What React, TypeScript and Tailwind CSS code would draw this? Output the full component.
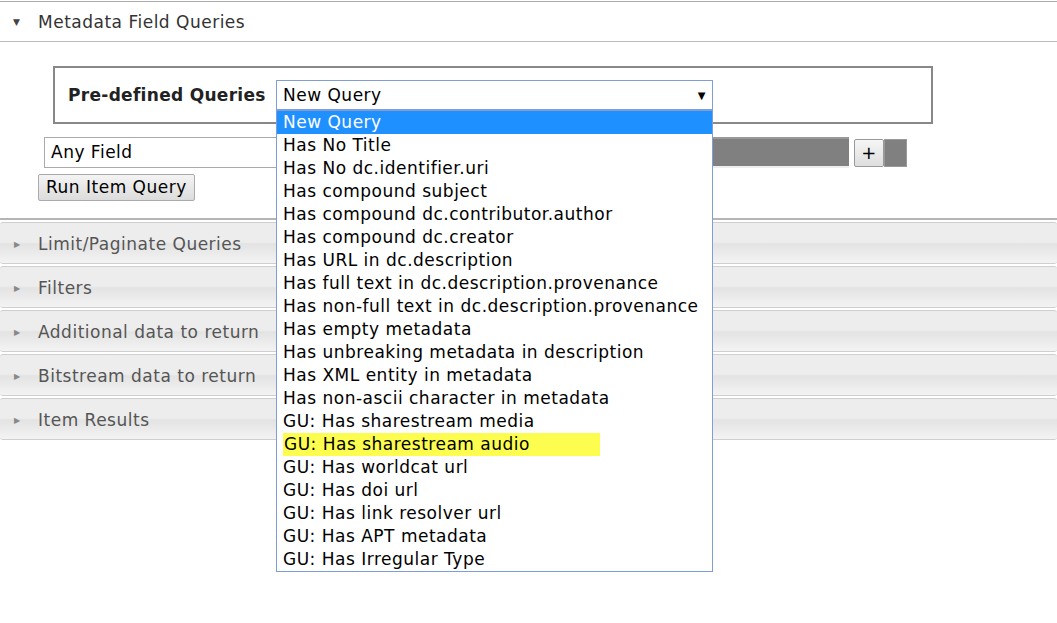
import React from "react";

const queries = [
  "New Query",
  "Has No Title",
  "Has No dc.identifier.uri",
  "Has compound subject",
  "Has compound dc.contributor.author",
  "Has compound dc.creator",
  "Has URL in dc.description",
  "Has full text in dc.description.provenance",
  "Has non-full text in dc.description.provenance",
  "Has empty metadata",
  "Has unbreaking metadata in description",
  "Has XML entity in metadata",
  "Has non-ascii character in metadata",
  "GU: Has sharestream media",
  "GU: Has sharestream audio",
  "GU: Has worldcat url",
  "GU: Has doi url",
  "GU: Has link resolver url",
  "GU: Has APT metadata",
  "GU: Has Irregular Type",
];

const sections = [
  "Limit/Paginate Queries",
  "Filters",
  "Additional data to return",
  "Bitstream data to return",
  "Item Results",
];

const QueryList = () => (
  <ul className="absolute left-0 top-full z-10 w-[437px] border border-[#7f9ed8] bg-white">
    {queries.map((q, i) => (
      <li
        key={q}
        className={`h-[23px] leading-[23px] ${i === 0 ? "bg-[#1e90ff] text-white" : "text-black"}`}
      >
        {i === 14 ? (
          <span className="ml-[6px] block w-[317px] bg-[#fdfd4f] pl-px">{q}</span>
        ) : (
          <span className="pl-[6px]">{q}</span>
        )}
      </li>
    ))}
  </ul>
);

const Section = ({ title }: { title: string }) => (
  <div className="mt-[2px] flex h-[42px] items-center rounded-[3px] border-y border-[#cfcfcf] bg-[linear-gradient(#ededed_0%,#ededed_48%,#e3e3e3_52%,#f3f3f3_100%)] pt-[3px] text-[#555]">
    <span className="ml-[14px] w-[24px] text-[8px] text-[#888]">▶</span>
    <span>{title}</span>
  </div>
);

export default function App() {
  return (
    <div className="h-[623px] w-[1057px] overflow-hidden bg-white text-[17px] tracking-[0.5px] font-['DejaVu_Sans',Verdana,sans-serif]">
      <div className="mt-px border-t border-[#aaa]" />
      <div className="flex h-[40px] items-center border-b border-[#bbb] pt-[3px] text-[#333]">
        <span className="ml-[13px] w-[25px] text-[9px] text-[#444]">▼</span>
        <span>Metadata Field Queries</span>
      </div>

      <div className="ml-[53px] mt-[24px] flex h-[58px] w-[880px] items-center border-2 border-[#888] pl-[13px]">
        <span className="w-[208px] pt-[2px] font-bold tracking-[0.3px] text-[#222]">Pre-defined Queries</span>
        <div className="relative">
          <div className="flex h-[30px] w-[437px] items-center justify-between border border-[#7f9ed8] bg-white pl-[6px] pr-[6px] pt-[1px]">
            <span>New Query</span>
            <span className="text-[10px]">▼</span>
          </div>
          <QueryList />
        </div>
      </div>

      <div className="ml-[44px] mt-[13px] flex items-center">
        <div className="flex h-[31px] w-[668px] items-center border border-[#aaa] pl-[6px] pt-[1px]">Any Field</div>
        <div className="h-[31px] w-[137px] border-t-2 border-l border-[#999] border-b-2 border-b-[#eee] bg-[#808080]" />
        <button className="ml-[5px] flex h-[28px] w-[30px] items-center justify-center rounded-[2px] border border-[#999] bg-[linear-gradient(#f6f6f6,#dedede)] text-[18px] leading-none">
          +
        </button>
        <div className="h-[28px] w-[23px] border border-[#999] bg-[#808080]" />
      </div>

      <button className="ml-[38px] mt-[6px] flex h-[27px] items-center rounded-[2px] border border-[#aaa] bg-[linear-gradient(#f4f4f4,#dcdcdc)] px-[7px] pt-[1px] text-black">
        Run Item Query
      </button>

      <div className="mt-[17px] border-t-2 border-[#b5b5b5]">
        {sections.map((s) => (
          <Section key={s} title={s} />
        ))}
      </div>
    </div>
  );
}
